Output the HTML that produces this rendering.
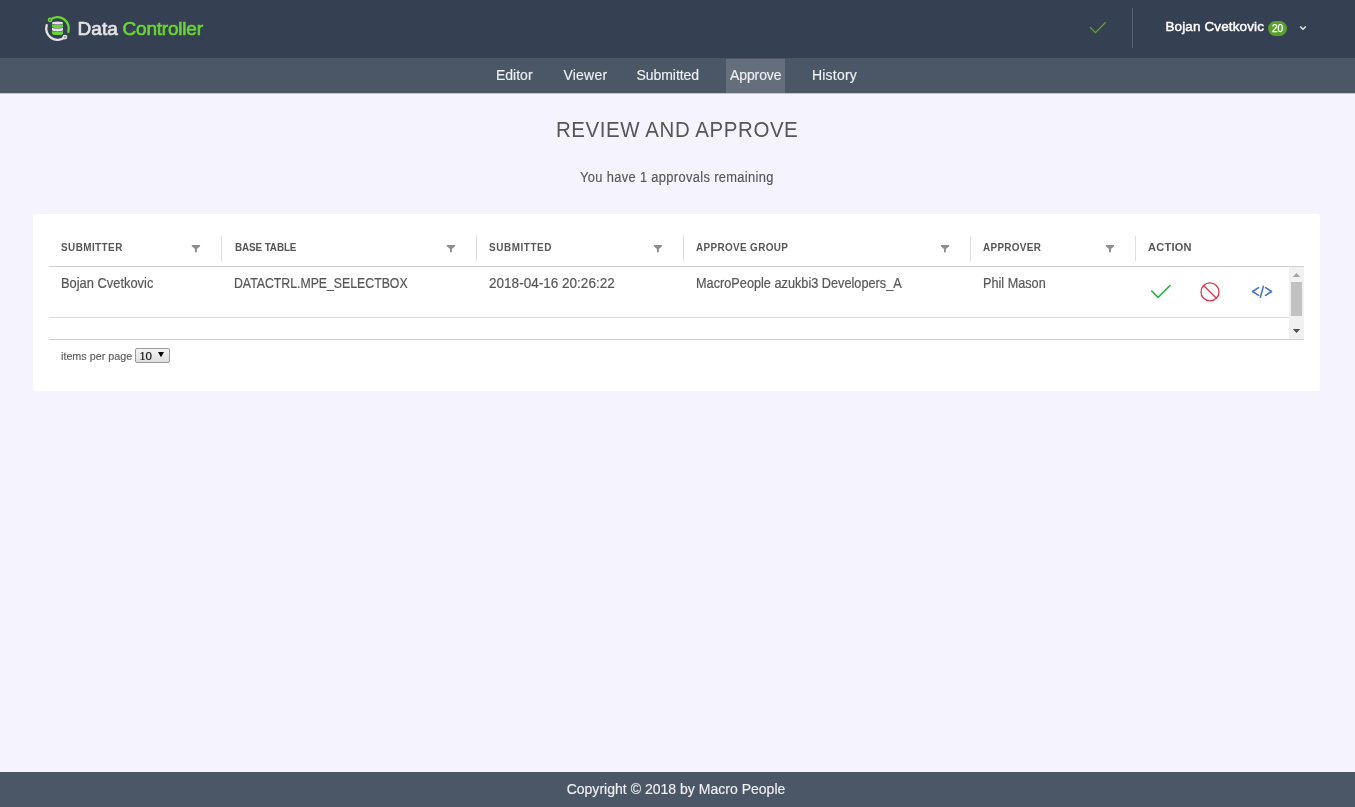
<!DOCTYPE html>
<html><head><meta charset="utf-8">
<style>
*{box-sizing:border-box;margin:0;padding:0}
html,body{width:1355px;height:807px;overflow:hidden}
body{background:#f5f3fd;font-family:"Liberation Sans",sans-serif;color:#565656;position:relative}
.abs{position:absolute;white-space:nowrap}
#hdr{position:absolute;left:0;top:0;width:1355px;height:58px;background:#354052}
#nav{position:absolute;left:0;top:58px;width:1355px;height:35px;background:#4b5667;box-shadow:0 1px 0 #c6c6ca}
#nav .it{position:absolute;top:0;height:35px;line-height:35px;font-size:14px;color:#eef0f2;white-space:nowrap;-webkit-text-stroke:0.15px #eef0f2}
#nav .act{position:absolute;left:726px;top:1px;width:59px;height:34px;background:#646e7c}
#foot{position:absolute;left:0;top:772px;width:1355px;height:35px;background:#4b5667}
#card{position:absolute;left:33px;top:214px;width:1287px;height:177px;background:#fff;border-radius:3px}
.th{position:absolute;top:241px;font-size:11px;font-weight:bold;color:#565656;white-space:nowrap;transform:scaleX(0.9);transform-origin:0 0}
.sep{position:absolute;top:236px;width:1px;height:25px;background:#dedede}
.flt{position:absolute;top:238px;width:20px;height:20px}
.td{position:absolute;top:274.8px;font-size:14.5px;color:#565656;white-space:nowrap;transform-origin:0 0;-webkit-text-stroke:0.2px #565656}
.hl{position:absolute;height:1px;background:#cfcfcf}
</style></head><body>
<div id="root" style="position:absolute;left:0;top:0;width:1355px;height:807px;background:#f5f3fd;will-change:transform">
<div id="hdr"></div>
<div id="nav">
  <div class="act"></div>
  <div class="it" style="left:496px">Editor</div>
  <div class="it" style="left:563.5px;letter-spacing:0.2px">Viewer</div>
  <div class="it" style="left:636.5px;letter-spacing:-0.05px">Submitted</div>
  <div class="it" style="left:730px;letter-spacing:-0.1px">Approve</div>
  <div class="it" style="left:812px;letter-spacing:0.2px">History</div>
</div>

<!-- logo -->
<svg class="abs" style="left:40px;top:10px" width="40" height="40" viewBox="40 10 40 40">
  <path d="M50.09 19.97 A11.3 11.3 0 0 1 68.31 31.8" fill="none" stroke="#6ad631" stroke-width="2.3" stroke-linecap="round"/>
  <circle cx="50.09" cy="19.97" r="2.4" fill="#6ad631"/><circle cx="50.09" cy="19.97" r="1" fill="#4f8a3c"/>
  <path d="M64.91 37.03 A11.3 11.3 0 0 1 46.69 25.2" fill="none" stroke="#e4e4e4" stroke-width="2.3" stroke-linecap="round"/>
  <circle cx="64.91" cy="37.03" r="2.4" fill="#e4e4e4"/><circle cx="64.91" cy="37.03" r="1" fill="#8a8f98"/>
  <ellipse cx="57.5" cy="23.1" rx="5.5" ry="1.5" fill="#e4e4e4"/>
  <path d="M52 23.5 A5.5 1.6 0 0 0 63 23.5 L63 26.6 A5.5 1.6 0 0 1 52 26.6 Z" fill="#6ad631"/>
  <path d="M52 27.0 A5.5 1.6 0 0 0 63 27.0 L63 29.8 A5.5 1.6 0 0 1 52 29.8 Z" fill="#e4e4e4"/>
  <path d="M52 30.2 A5.5 1.6 0 0 0 63 30.2 L63 33.5 A5.5 1.6 0 0 1 52 33.5 Z" fill="#6ad631"/>
</svg>
<div class="abs" style="left:77.5px;top:17.5px;font-size:19px;color:#e4e4e4;letter-spacing:0.1px;-webkit-text-stroke:0.65px #e4e4e4">Data</div><div class="abs" style="left:122.5px;top:17.5px;font-size:19px;color:#6ad631;letter-spacing:-0.2px;-webkit-text-stroke:0.65px #6ad631">Controller</div>

<!-- header right -->
<svg class="abs" style="left:1088px;top:20px" width="20" height="16" viewBox="0 0 20 16"><path d="M1.9 7 L7.5 12.6 L17.7 2.3" fill="none" stroke="#5ea52b" stroke-width="1.25"/></svg>
<div class="abs" style="left:1132px;top:8px;width:1px;height:40px;background:#586271"></div>
<div class="abs" style="left:1165.5px;top:19.1px;font-size:13.5px;color:#fff;letter-spacing:0.12px;-webkit-text-stroke:0.45px #fff">Bojan Cvetkovic</div>
<div class="abs" style="left:1268px;top:21px;width:19px;height:15px;border-radius:7.5px;background:#5aa02c;color:#fff;font-size:10.1px;line-height:16.2px;text-align:center;-webkit-text-stroke:0.25px #fff">20</div>
<svg class="abs" style="left:1298px;top:24px" width="10" height="8" viewBox="0 0 10 8"><path d="M2.2 2.5 L5 5.3 L7.8 2.5" fill="none" stroke="#e6e8eb" stroke-width="1.5"/></svg>

<!-- title -->
<div class="abs" style="left:555.5px;top:117px;font-size:22px;color:#565656;letter-spacing:0.62px;transform:scaleX(0.93);transform-origin:0 0">REVIEW AND APPROVE</div>
<div class="abs" style="left:580px;top:169.3px;font-size:14px;color:#565656;letter-spacing:0.37px;transform:scaleX(0.92);transform-origin:0 0;-webkit-text-stroke:0.15px #565656">You have 1 approvals remaining</div>

<div id="card"></div>
<div class="th" style="left:61px;letter-spacing:0.49px">SUBMITTER</div>
<div class="th" style="left:234.5px;letter-spacing:-0.13px">BASE TABLE</div>
<div class="th" style="left:489px;letter-spacing:0.64px">SUBMITTED</div>
<div class="th" style="left:696px;letter-spacing:0.41px">APPROVE GROUP</div>
<div class="th" style="left:983px;letter-spacing:0.37px">APPROVER</div>
<div class="th" style="left:1148px;letter-spacing:0.28px;transform:none">ACTION</div>
<div class="sep" style="left:221px"></div>
<div class="sep" style="left:476px"></div>
<div class="sep" style="left:683px"></div>
<div class="sep" style="left:970px"></div>
<div class="sep" style="left:1135px"></div>

<svg class="flt" style="left:186px" viewBox="0 0 20 20"><path d="M5.8 6.9 L14.1 6.9 L14.1 8.3 L10.9 11 L10.9 13.9 L9 14.6 L9 11 L5.8 8.3 Z" fill="#8e8e8e"/></svg>
<svg class="flt" style="left:441px" viewBox="0 0 20 20"><path d="M5.8 6.9 L14.1 6.9 L14.1 8.3 L10.9 11 L10.9 13.9 L9 14.6 L9 11 L5.8 8.3 Z" fill="#8e8e8e"/></svg>
<svg class="flt" style="left:648px" viewBox="0 0 20 20"><path d="M5.8 6.9 L14.1 6.9 L14.1 8.3 L10.9 11 L10.9 13.9 L9 14.6 L9 11 L5.8 8.3 Z" fill="#8e8e8e"/></svg>
<svg class="flt" style="left:935px" viewBox="0 0 20 20"><path d="M5.8 6.9 L14.1 6.9 L14.1 8.3 L10.9 11 L10.9 13.9 L9 14.6 L9 11 L5.8 8.3 Z" fill="#8e8e8e"/></svg>
<svg class="flt" style="left:1100px" viewBox="0 0 20 20"><path d="M5.8 6.9 L14.1 6.9 L14.1 8.3 L10.9 11 L10.9 13.9 L9 14.6 L9 11 L5.8 8.3 Z" fill="#8e8e8e"/></svg>

<div class="hl" style="left:49px;top:266px;width:1255px"></div>
<div class="td" style="left:61px;transform:scaleX(0.888)">Bojan Cvetkovic</div>
<div class="td" style="left:234px;transform:scaleX(0.847)">DATACTRL.MPE_SELECTBOX</div>
<div class="td" style="left:489px;transform:scaleX(0.934)">2018-04-16 20:26:22</div>
<div class="td" style="left:696px;transform:scaleX(0.877)">MacroPeople azukbi3 Developers_A</div>
<div class="td" style="left:983px;transform:scaleX(0.874)">Phil Mason</div>

<!-- action icons -->
<svg class="abs" style="left:1140px;top:270px" width="140" height="40" viewBox="1140 270 140 40">
  <path d="M1151.3 290.6 L1158.1 297.4 L1170.5 285.1" fill="none" stroke="#2eb34a" stroke-width="1.6"/>
  <circle cx="1210" cy="291.9" r="9" fill="none" stroke="#e3344a" stroke-width="1.3"/>
  <path d="M1203.6 285.5 L1216.4 298.3" fill="none" stroke="#e3344a" stroke-width="1.3"/>
  <path d="M1258.6 287.6 L1252.6 291.5 L1258.6 295.4 M1263.4 286.2 L1260.4 297.2 M1265.5 287.6 L1271.5 291.5 L1265.5 295.4" fill="none" stroke="#4673cf" stroke-width="1.55" stroke-linecap="round" stroke-linejoin="round"/>
</svg>

<div class="hl" style="left:49px;top:317px;width:1240px;background:#dadada"></div>
<div class="hl" style="left:49px;top:339px;width:1255px"></div>

<!-- scrollbar -->
<div class="abs" style="left:1289px;top:267px;width:15px;height:72px;background:#f1f1f1"></div>
<div class="abs" style="left:1291px;top:282px;width:11px;height:34px;background:#c1c1c1"></div>
<svg class="abs" style="left:1289px;top:267px" width="15" height="72" viewBox="0 0 15 72">
  <path d="M3.8 10 L7.5 6 L11.2 10 Z" fill="#a3a3a3"/>
  <path d="M3.8 62 L7.5 66 L11.2 62 Z" fill="#505050"/>
</svg>

<div class="abs" style="left:61px;top:350.2px;font-size:11.5px;color:#5a5a5a;transform:scaleX(0.935);transform-origin:0 0;-webkit-text-stroke:0.15px #5a5a5a">items per page</div>
<div class="abs" style="left:135px;top:348px;width:35px;height:15px;border:1px solid #9a9a9a;border-radius:2px;background:linear-gradient(#f4f4f4,#dedede)"></div>
<div class="abs" style="left:139.5px;top:348.5px;font-size:11.5px;line-height:15px;color:#111;-webkit-text-stroke:0.2px #111"><span style="font-family:'Liberation Serif',serif;font-size:12px">1</span>0</div>
<svg class="abs" style="left:156px;top:350px" width="10" height="10" viewBox="0 0 10 10"><path d="M2 2 L8 2 L5 7.3 Z" fill="#000"/></svg>

<div id="foot"><div class="abs" style="left:-1.5px;width:1355px;top:9px;text-align:center;font-size:14px;color:#eef0f2;letter-spacing:0.02px;-webkit-text-stroke:0.15px #eef0f2">Copyright © 2018 by Macro People</div></div>
</div>
</body></html>
